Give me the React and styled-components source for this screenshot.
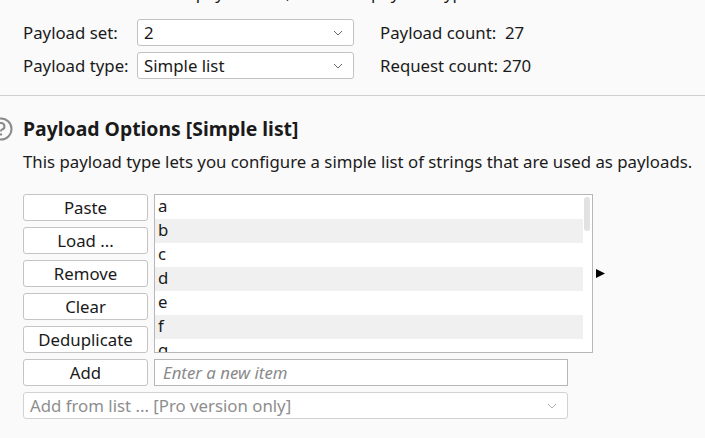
import React from "react"
import styled, { createGlobalStyle } from "styled-components"

const GlobalStyle = createGlobalStyle`
  html, body {
    margin: 0;
    padding: 0;
    background: #fafafa;
  }
  body {
    font-family: "Noto Sans", "DejaVu Sans", sans-serif;
    color: #1a1a1a;
  }
`

const Page = styled.div`
  width: 705px;
  height: 438px;
  overflow: hidden;
  background: #fafafa;
  font-size: 16.8px;
`

const Block = styled.div`
  padding-left: 23px;
`

const IntroLine = styled.div`
  margin-top: -18px;
  height: 22px;
  line-height: 22px;
  white-space: nowrap;
`

const TopGrid = styled.div`
  display: grid;
  grid-template-columns: 114px 217px auto;
  grid-auto-rows: 27px;
  row-gap: 6px;
  align-items: center;
  margin-top: 15px;
  margin-bottom: 16px;
`

const Label = styled.span`
  line-height: 22px;
  white-space: nowrap;
`

const SelectBox = styled.div`
  display: flex;
  align-items: center;
  justify-content: space-between;
  box-sizing: border-box;
  height: 27px;
  width: ${({ $width }) => $width || "100%"};
  margin-top: ${({ $gap }) => $gap || 0};
  padding: 0 10px 0 6px;
  background: #fff;
  border: 1px solid ${({ $disabled }) => ($disabled ? "#d2d2d2" : "#c2c2c2")};
  border-radius: 3px;
  color: ${({ $disabled }) => ($disabled ? "#8e8e8e" : "#1a1a1a")};
  white-space: nowrap;
`

const Count = styled.span`
  margin-left: 26px;
  white-space: nowrap;
`

const Divider = styled.div`
  height: 1px;
  background: #cfcfcf;
`

const HeadingRow = styled.div`
  display: flex;
  align-items: center;
  gap: 10px;
  margin-left: -34px;
  margin-top: 21px;
`

const Heading = styled.h2`
  margin: 0;
  font-size: 19.4px;
  font-weight: 700;
  line-height: 24px;
  color: #1a1a1a;
`

const Description = styled.p`
  margin: 10px 0 21px;
  line-height: 22px;
  white-space: nowrap;
`

const Editor = styled.div`
  display: grid;
  grid-template-columns: 125px auto;
  column-gap: 6px;
  row-gap: 6px;
`

const ButtonColumn = styled.div`
  display: flex;
  flex-direction: column;
  gap: 6px;
`

const Button = styled.button`
  box-sizing: border-box;
  width: 125px;
  height: 27px;
  padding: 0;
  background: #fff;
  border: 1px solid #c4c4c4;
  border-radius: 3px;
  font: inherit;
  color: #1a1a1a;
  line-height: 22px;
`

const ListArea = styled.div`
  display: flex;
  align-items: center;
  gap: 3px;
`

const ListBox = styled.div`
  position: relative;
  box-sizing: border-box;
  width: 439px;
  height: 159px;
  overflow: hidden;
  background: #fff;
  border: 1px solid #b8b6b8;
  padding-right: 9px;
`

const Row = styled.div`
  height: 24px;
  line-height: 22px;
  padding-left: 3px;
  background: ${({ $striped }) => ($striped ? "#f0f0f0" : "#fff")};
`

const ScrollThumb = styled.div`
  position: absolute;
  top: 2px;
  right: 2px;
  width: 6px;
  height: 34px;
  border-radius: 3px;
  background: #e2e2e2;
`

const Input = styled.div`
  box-sizing: border-box;
  width: 414px;
  height: 27px;
  padding-left: 8px;
  line-height: 25px;
  background: #fff;
  border: 1px solid #b8b6b8;
  color: #8a8a8a;
  font-style: italic;
`

const Chevron = ({ color = "#666" }) => (
  <svg width="10" height="6" viewBox="0 0 10 6">
    <path d="M1 1 L5 5 L9 1" fill="none" stroke={color} strokeWidth="1" />
  </svg>
)

const HelpIcon = () => (
  <svg width="24" height="24" viewBox="0 0 24 24" style={{ flex: "none" }}>
    <circle cx="12" cy="12" r="10.5" fill="none" stroke="#8a8a8a" strokeWidth="2" />
    <path
      d="M8.6 9.4 A3.4 3.4 0 1 1 12.8 12.6 C12.1 13 12 13.6 12 14.4"
      fill="none"
      stroke="#8a8a8a"
      strokeWidth="2"
    />
    <circle cx="12" cy="17.4" r="1.2" fill="#8a8a8a" />
  </svg>
)

const Arrow = () => (
  <svg width="9" height="9" viewBox="0 0 9 9" style={{ flex: "none" }}>
    <path d="M0 0 L9 4.5 L0 9 Z" fill="#000" />
  </svg>
)

const items = ["a", "b", "c", "d", "e", "f", "g"]

export default function App() {
  return (
    <Page>
      <GlobalStyle />
      <Block>
        <IntroLine>
          are available for each payload set, and each payload type can be customized in different ways.
        </IntroLine>
        <TopGrid>
          <Label>Payload set:</Label>
          <SelectBox>
            <span>2</span>
            <Chevron />
          </SelectBox>
          <Count>Payload count:&nbsp; 27</Count>
          <Label>Payload type:</Label>
          <SelectBox>
            <span>Simple list</span>
            <Chevron />
          </SelectBox>
          <Count>Request count: 270</Count>
        </TopGrid>
      </Block>
      <Divider />
      <Block>
        <HeadingRow>
          <HelpIcon />
          <Heading>Payload Options [Simple list]</Heading>
        </HeadingRow>
        <Description>
          This payload type lets you configure a simple list of strings that are used as payloads.
        </Description>
        <Editor>
          <ButtonColumn>
            <Button>Paste</Button>
            <Button>Load ...</Button>
            <Button>Remove</Button>
            <Button>Clear</Button>
            <Button>Deduplicate</Button>
          </ButtonColumn>
          <ListArea>
            <ListBox>
              {items.map((item, i) => (
                <Row key={item} $striped={i % 2 === 1}>
                  {item}
                </Row>
              ))}
              <ScrollThumb />
            </ListBox>
            <Arrow />
          </ListArea>
          <Button>Add</Button>
          <Input>Enter a new item</Input>
        </Editor>
        <SelectBox $width="545px" $gap="6px" $disabled>
          <span>Add from list ... [Pro version only]</span>
          <Chevron color="#b0b0b0" />
        </SelectBox>
      </Block>
    </Page>
  )
}
